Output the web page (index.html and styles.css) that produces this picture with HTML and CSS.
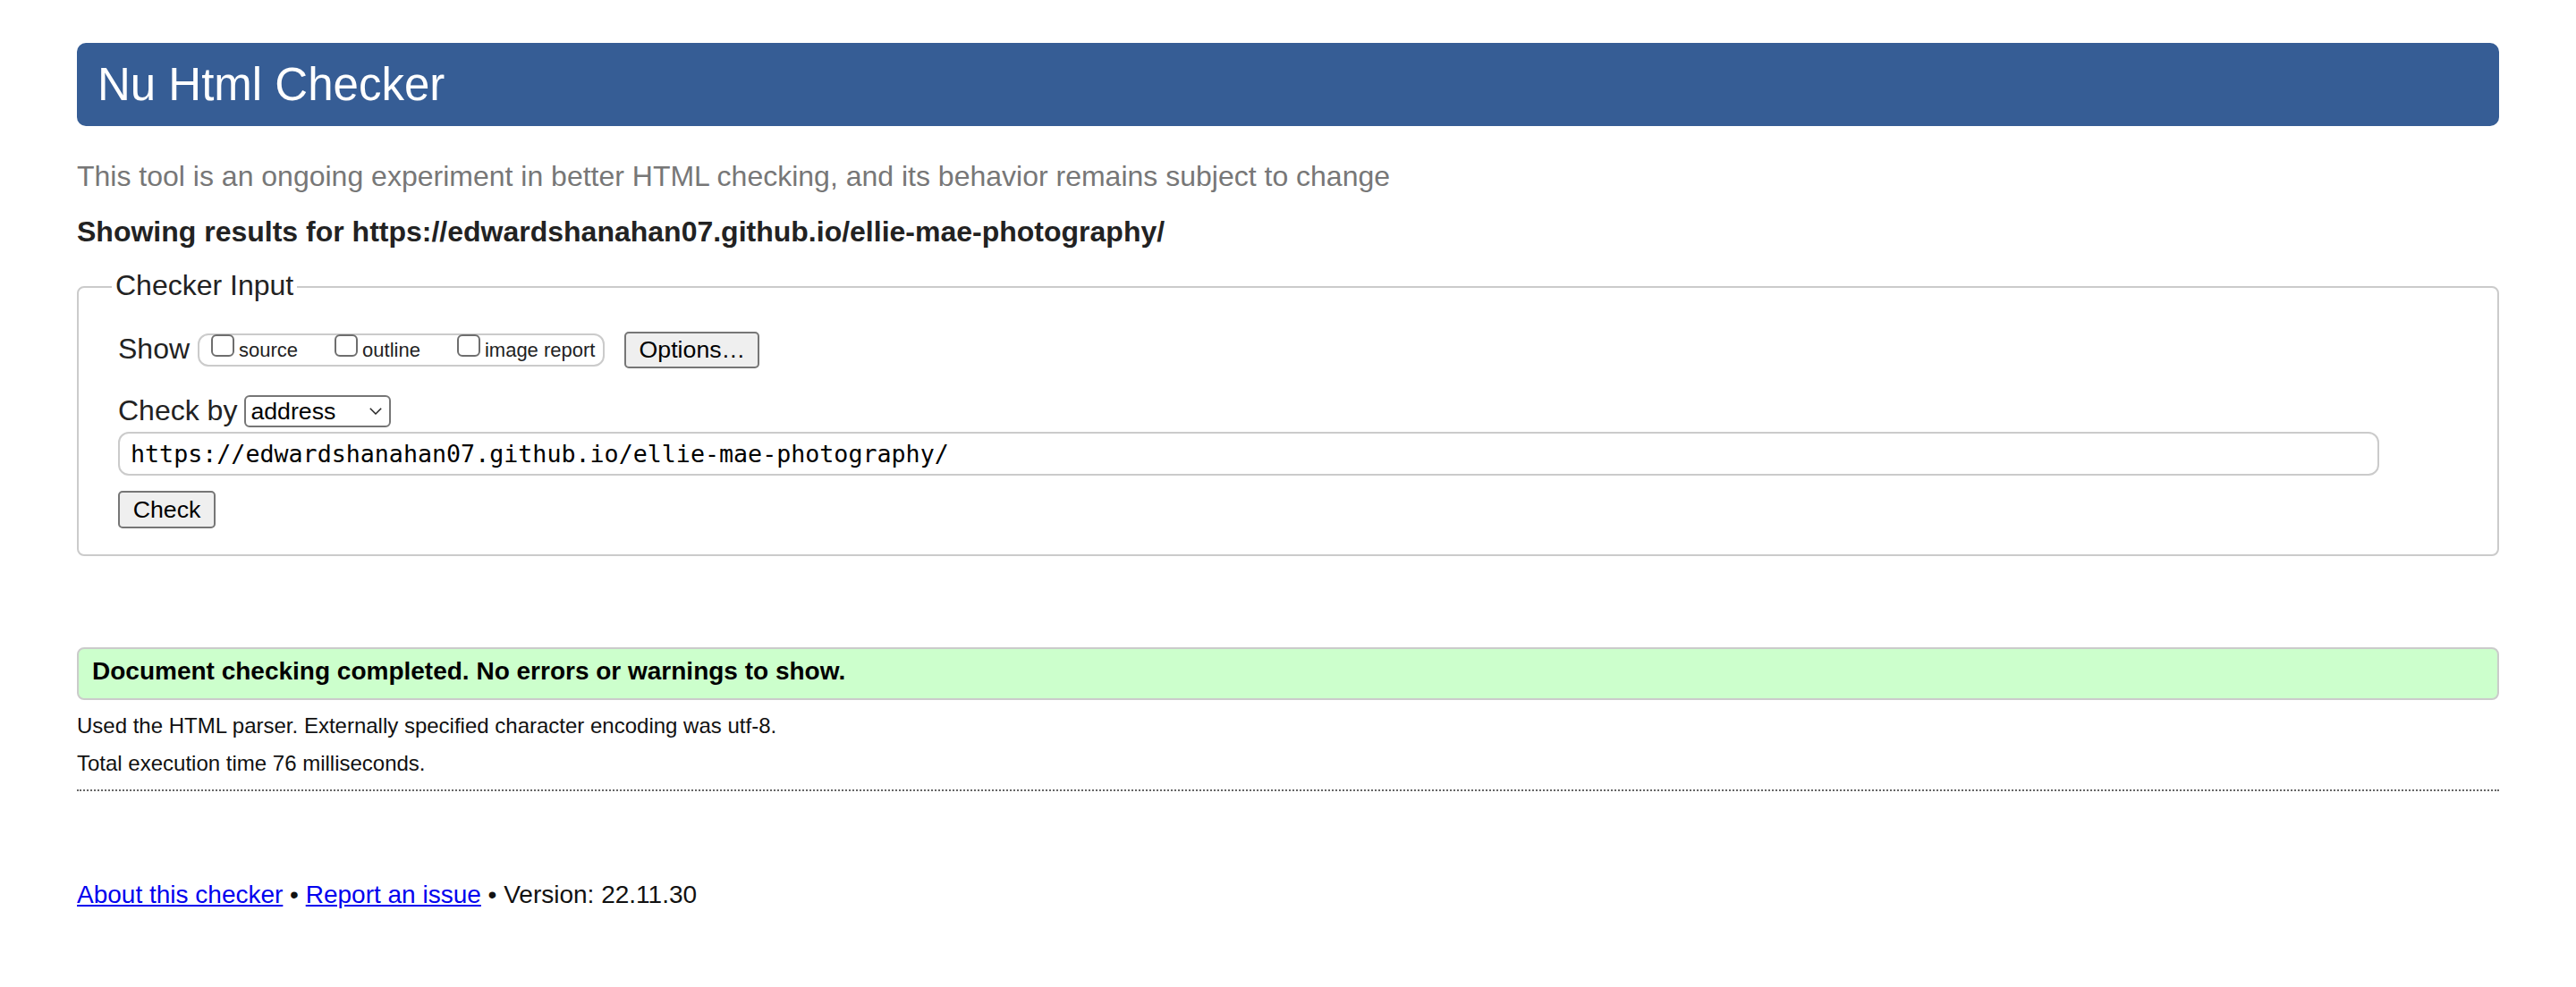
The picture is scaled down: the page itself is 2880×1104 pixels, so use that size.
FILE: index.html
```html
<!DOCTYPE html>
<html lang="en">
<head>
<meta charset="utf-8">
<title>Showing results for https://edwardshanahan07.github.io/ellie-mae-photography/ - Nu Html Checker</title>
<link rel="stylesheet" href="styles.css">
</head>
<body>
<h1 class="title">Nu Html Checker</h1>
<p class="intro">This tool is an ongoing experiment in better HTML checking, and its behavior remains subject to change</p>
<p class="results">Showing results for https://edwardshanahan07.github.io/ellie-mae-photography/</p>
<form class="checker">
  <fieldset class="input-set">
    <legend class="legend">Checker Input</legend>
    <div class="row show-row">
      <span class="label">Show</span>
      <span class="group">
        <label class="opt"><input type="checkbox" class="box"><span>source</span></label>
        <label class="opt"><input type="checkbox" class="box"><span>outline</span></label>
        <label class="opt"><input type="checkbox" class="box"><span>image report</span></label>
      </span>
      <button type="button" class="btn options">Options…</button>
    </div>
    <div class="row by-row">
      <span class="label">Check by</span>
      <span class="select-wrap">
        <select class="select"><option>address</option></select>
        <svg class="chev" width="16" height="10" viewBox="0 0 16 10"><path d="M1.8 1.8 L8 8 L14.2 1.8" fill="none" stroke="#222" stroke-width="1.5"/></svg>
      </span>
    </div>
    <input class="url" type="text" value="https://edwardshanahan07.github.io/ellie-mae-photography/">
    <div class="row submit-row">
      <button type="button" class="btn check">Check</button>
    </div>
  </fieldset>
</form>
<p class="success">Document checking completed. No errors or warnings to show.</p>
<p class="details first">Used the HTML parser. Externally specified character encoding was utf-8.</p>
<p class="details">Total execution time 76 milliseconds.</p>
<hr class="rule">
<p class="footer"><a href="#">About this checker</a> • <a href="#">Report an issue</a> • Version: 22.11.30</p>
</body>
</html>
```
FILE: styles.css
```css
html, body {
  background: #fff;
}
body {
  margin: 0;
  padding: 48px 86px 0;
  font-family: "Liberation Sans", Arial, Helvetica, sans-serif;
  color: #000;
}
.title {
  margin: 0;
  height: 93px;
  line-height: 93px;
  padding: 0 23px;
  background: #365d95;
  color: #fff;
  font-size: 51px;
  font-weight: normal;
  border-radius: 10px;
}
.intro {
  margin: 37px 0 0;
  font-size: 32px;
  line-height: 38px;
  color: #777;
}
.results {
  margin: 24px 0 0;
  font-size: 32px;
  line-height: 38px;
  font-weight: bold;
  color: #222;
}
.checker {
  margin: 22px 0 0;
}
.input-set {
  margin: 0;
  border: 2px solid #cbcbcb;
  border-radius: 8px;
  padding: 29px 40px 29px 44px;
  min-width: 0;
}
.legend {
  font-size: 32px;
  line-height: 38px;
  padding: 0 4px 4px;
  margin-left: -7px;
  color: #222;
}
.row {
  display: flex;
  align-items: center;
}
.label {
  font-size: 32px;
  line-height: 38px;
  color: #222;
}
.show-row {
  height: 41px;
}
.show-row .label {
  margin-bottom: 3px;
}
.group {
  display: flex;
  align-items: center;
  height: 37px;
  box-sizing: border-box;
  margin-left: 9px;
  padding: 0 9px 0 13px;
  border: 2px solid #cbcbcb;
  border-radius: 12px;
}
.opt {
  display: flex;
  align-items: center;
  gap: 5px;
  font-size: 22px;
  line-height: 26px;
  color: #222;
}
.opt + .opt {
  margin-left: 41px;
}
.box {
  appearance: none;
  -webkit-appearance: none;
  margin: 0 0 10px 0;
  width: 26px;
  height: 25px;
  box-sizing: border-box;
  border: 2px solid #6e6e6e;
  border-radius: 6px;
  background: #fff;
}
.btn {
  font-family: "Liberation Sans", Arial, Helvetica, sans-serif;
  font-size: 26.7px;
  height: 42px;
  box-sizing: border-box;
  padding: 0 15px;
  background: #efefef;
  color: #000;
  border: 2px solid #767676;
  border-radius: 5px;
}
.options {
  margin-left: 22px;
  width: 151px;
  height: 41px;
  padding: 0;
}
.by-row {
  margin-top: 30px;
  height: 36px;
}
.by-row .label {
  margin-bottom: 3px;
}
.select-wrap {
  position: relative;
  margin-left: 8px;
  display: flex;
}
.select {
  appearance: none;
  -webkit-appearance: none;
  width: 164px;
  height: 36px;
  box-sizing: border-box;
  padding: 0 0 0 5px;
  font-family: "Liberation Sans", Arial, Helvetica, sans-serif;
  font-size: 26.7px;
  color: #000;
  background: #fff;
  border: 2px solid #767676;
  border-radius: 6px;
}
.chev {
  position: absolute;
  right: 9px;
  top: 13px;
  pointer-events: none;
}
.url {
  display: block;
  margin: 5px 0 0;
  width: 2528px;
  height: 49px;
  box-sizing: border-box;
  padding: 0 12px;
  font-family: "DejaVu Sans Mono", Menlo, monospace;
  font-size: 26.67px;
  color: #000;
  background: #fff;
  border: 2px solid #cbcbcb;
  border-radius: 12px;
}
.submit-row {
  margin-top: 17px;
}
.check {
  width: 109px;
  padding: 0;
}
.success {
  margin: 102px 0 0;
  height: 59px;
  box-sizing: border-box;
  padding: 0 15px 6px;
  line-height: 49px;
  font-size: 28px;
  font-weight: bold;
  background: #ccffcc;
  border: 2px solid #cbcbcb;
  border-radius: 8px;
}
.details {
  margin: 14px 0 0;
  font-size: 24px;
  line-height: 28px;
  color: #111;
}
.details.first {
  margin-top: 15px;
}
.rule {
  margin: 15px 0 0;
  height: 0;
  border: 0;
  border-top: 2px dotted #666;
}
.footer {
  margin: 100px 0 0;
  font-size: 28px;
  line-height: 32px;
  color: #111;
}
.footer a {
  color: #0000ee;
  text-decoration: underline;
}
```
